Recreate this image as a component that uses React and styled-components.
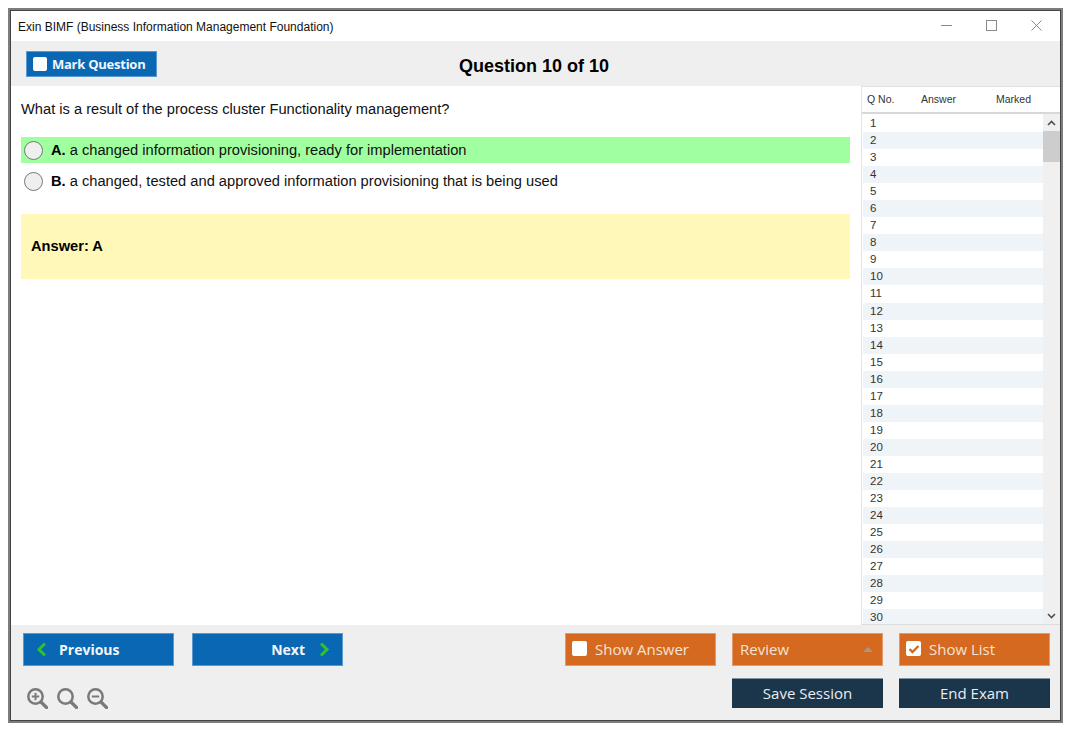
import React from 'react';
import styled, { createGlobalStyle } from 'styled-components';

const GlobalStyle = createGlobalStyle`
  html, body { margin: 0; padding: 0; background: #fff; }
  body { font-family: "Liberation Sans", Arial, sans-serif; color: #000; }
  * { box-sizing: border-box; }
`;

const Page = styled.div`
  width: 1075px;
  height: 735px;
  padding: 8px 12px 12px 8px;
`;

const Win = styled.div`
  width: 100%;
  height: 100%;
  border: 2px solid #7d7d7d;
  outline: 1px solid #444;
  outline-offset: -3px;
  padding: 1px;
  display: flex;
  flex-direction: column;
  background: #fff;
`;

const TitleBar = styled.div`
  height: 30px;
  flex: none;
  display: flex;
  align-items: center;
  justify-content: space-between;
  padding: 2px 0 0 7px;
  font-size: 12px;
  color: #111;
`;

const WinControls = styled.div`
  display: flex;
  align-items: center;
  gap: 34px;
  margin-top: -3px;
  padding-right: 18px;
`;

const TopBar = styled.div`
  height: 45px;
  flex: none;
  background: #efefef;
  display: flex;
  align-items: center;
  position: relative;
  padding: 0 0 0 15px;
`;

const BlueBtn = styled.div`
  background: #0a67b4;
  border: 1px solid #5b9ad0;
  color: #f2f6fa;
  font-family: "Open Sans", sans-serif;
  font-weight: 700;
`;

const MarkBtn = styled(BlueBtn)`
  width: 131px;
  height: 26px;
  margin-top: 1px;
  display: flex;
  align-items: center;
  gap: 5px;
  padding-left: 6px;
  font-size: 13px;
  letter-spacing: -0.25px;
`;

const Box = styled.span`
  width: ${(p) => p.$size || 14}px;
  height: ${(p) => p.$size || 14}px;
  flex: none;
  background: #fff;
  border-radius: 2px;
  display: inline-flex;
  align-items: center;
  justify-content: center;
`;

const QuestionNo = styled.div`
  position: absolute;
  left: 448px;
  top: 15px;
  font-size: 18px;
  font-weight: 700;
  line-height: 21px;
`;

const Main = styled.div`
  flex: 1;
  min-height: 0;
  display: flex;
`;

const Content = styled.div`
  flex: 1;
  min-width: 0;
  padding: 14px 11px 0 10px;
`;

const Question = styled.div`
  font-size: 14.67px;
  line-height: 18px;
  color: #111;
  margin-bottom: 19px;
`;

const Option = styled.div`
  height: 26px;
  display: flex;
  align-items: center;
  gap: 8px;
  padding-left: 3px;
  margin-bottom: 5px;
  font-size: 14.67px;
  color: #111;
  background: ${(p) => (p.$correct ? '#a0ff9f' : 'transparent')};
  b { color: #000; }
`;

const Radio = styled.span`
  width: 19px;
  height: 19px;
  flex: none;
  border-radius: 50%;
  background: #efefef;
  border: 1px solid #777;
`;

const AnswerBox = styled.div`
  margin-top: 20px;
  height: 65px;
  background: #fff8b8;
  display: flex;
  align-items: center;
  padding: 0 0 2px 10px;
  font-size: 14.67px;
  font-weight: 700;
`;

const Side = styled.div`
  width: 199px;
  flex: none;
  display: flex;
  flex-direction: column;
  border-left: 1px solid #e4e4e4;
  border-bottom: 1px solid #dcdcdc;
`;

const SideHead = styled.div`
  height: 28px;
  flex: none;
  border-top: 1px solid #e0e0e0;
  border-bottom: 2px solid #d8d8d8;
  display: grid;
  grid-template-columns: 54px 75px 1fr;
  align-items: center;
  padding: 0 0 2px 5px;
  font-size: 10.5px;
  color: #333;
  background: #fff;
`;

const SideBody = styled.div`
  flex: 1;
  min-height: 0;
  display: flex;
  overflow: hidden;
  padding-left: 1px;
`;

const Rows = styled.div`
  flex: 1;
  min-width: 0;
  overflow: hidden;
  padding-top: 1px;
`;

const Row = styled.div`
  height: 17.06px;
  line-height: 17px;
  padding-left: 7px;
  font-size: 11.5px;
  color: #333;
  background: ${(p) => (p.$odd ? '#eff4f8' : '#fff')};
`;

const Scrollbar = styled.div`
  width: 17px;
  flex: none;
  background: #f0f0f0;
  display: flex;
  flex-direction: column;
  align-items: center;
`;

const ScrollArrow = styled.div`
  height: 17px;
  flex: none;
  display: flex;
  align-items: center;
  justify-content: center;
`;

const ScrollThumb = styled.div`
  width: 100%;
  height: 31px;
  flex: none;
  background: #cdcdcd;
`;

const ScrollTrack = styled.div`
  flex: 1;
`;

const Bottom = styled.div`
  height: 95px;
  flex: none;
  background: #efefef;
  display: flex;
  justify-content: space-between;
  padding: 8px 10px 10px 12px;
`;

const BottomLeft = styled.div`
  display: flex;
  flex-direction: column;
  justify-content: space-between;
`;

const NavRow = styled.div`
  display: flex;
  gap: 18px;
`;

const NavBtn = styled(BlueBtn)`
  width: 151px;
  height: 33px;
  display: flex;
  align-items: center;
  justify-content: ${(p) => (p.$right ? 'flex-end' : 'flex-start')};
  gap: ${(p) => (p.$right ? 14 : 12)}px;
  padding: 0 12px;
  font-size: 14px;
`;

const ZoomRow = styled.div`
  display: flex;
  gap: 9px;
  padding-left: 4px;
  margin-bottom: 1px;
`;

const BottomRight = styled.div`
  display: grid;
  grid-template-columns: repeat(3, 151px);
  grid-auto-rows: 33px;
  column-gap: 16px;
  row-gap: 12px;
`;

const OrangeBtn = styled.div`
  background: #d4691f;
  border: 1px solid #e39a66;
  color: #f6e3d4;
  font-family: "Open Sans", sans-serif;
  font-size: 15px;
  display: flex;
  align-items: center;
  gap: 8px;
  padding: 0 6px 2px;
  justify-content: ${(p) => (p.$between ? 'space-between' : 'flex-start')};
`;

const ReviewLabel = styled.span`
  padding-left: 1px;
`;

const Caret = styled.span`
  width: 0;
  height: 0;
  margin: 2px 3px 0 0;
  border-left: 5px solid transparent;
  border-right: 5px solid transparent;
  border-bottom: 5px solid #a8948a;
`;

const DarkBtn = styled.div`
  grid-column: ${(p) => p.$col};
  background: #1b354b;
  border-top: 1px solid #7f93a3;
  height: 30px;
  padding-bottom: 2px;
  color: #e9eef2;
  font-family: "Open Sans", sans-serif;
  font-size: 15px;
  display: flex;
  align-items: center;
  justify-content: center;
`;

const Chevron = ({ dir }) => (
  <svg width="11" height="15" viewBox="0 0 11 15">
    <path
      d={dir === 'left' ? 'M9 1.5 3 7.5l6 6' : 'M2 1.5l6 6-6 6'}
      fill="none"
      stroke="#2fc32a"
      strokeWidth="3"
    />
  </svg>
);

const ZoomIcon = ({ sign }) => (
  <svg width="21" height="21" viewBox="0 0 21 21">
    <circle cx="8.5" cy="8.5" r="7.2" fill="none" stroke="#7a7a7a" strokeWidth="2.5" />
    <path d="M14 14 19.5 19.5" stroke="#7a7a7a" strokeWidth="3.2" strokeLinecap="round" />
    {sign && <path d="M4.8 8.5h7.4" stroke="#7a7a7a" strokeWidth="2" />}
    {sign === 'plus' && <path d="M8.5 4.8v7.4" stroke="#7a7a7a" strokeWidth="2" />}
  </svg>
);

const rows = Array.from({ length: 30 }, (_, i) => i + 1);

export default function App() {
  return (
    <Page>
      <GlobalStyle />
      <Win>
        <TitleBar>
          <span>Exin BIMF (Business Information Management Foundation)</span>
          <WinControls>
            <svg width="11" height="11" viewBox="0 0 11 11">
              <path d="M0 5.5h11" stroke="#8a8a8a" />
            </svg>
            <svg width="11" height="11" viewBox="0 0 11 11">
              <rect x=".5" y=".5" width="10" height="10" fill="none" stroke="#8a8a8a" />
            </svg>
            <svg width="11" height="11" viewBox="0 0 11 11">
              <path d="M.5.5l10 10M10.5.5l-10 10" stroke="#8a8a8a" />
            </svg>
          </WinControls>
        </TitleBar>
        <TopBar>
          <MarkBtn>
            <Box />
            Mark Question
          </MarkBtn>
          <QuestionNo>Question 10 of 10</QuestionNo>
        </TopBar>
        <Main>
          <Content>
            <Question>What is a result of the process cluster Functionality management?</Question>
            <Option $correct>
              <Radio />
              <span><b>A.</b> a changed information provisioning, ready for implementation</span>
            </Option>
            <Option>
              <Radio />
              <span><b>B.</b> a changed, tested and approved information provisioning that is being used</span>
            </Option>
            <AnswerBox>Answer: A</AnswerBox>
          </Content>
          <Side>
            <SideHead>
              <span>Q No.</span>
              <span>Answer</span>
              <span>Marked</span>
            </SideHead>
            <SideBody>
              <Rows>
                {rows.map((n) => (
                  <Row key={n} $odd={n % 2 === 0}>{n}</Row>
                ))}
              </Rows>
              <Scrollbar>
                <ScrollArrow>
                  <svg width="9" height="6" viewBox="0 0 9 6">
                    <path d="M1 5l3.5-3.5L8 5" fill="none" stroke="#505050" strokeWidth="1.6" />
                  </svg>
                </ScrollArrow>
                <ScrollThumb />
                <ScrollTrack />
                <ScrollArrow>
                  <svg width="9" height="6" viewBox="0 0 9 6">
                    <path d="M1 1l3.5 3.5L8 1" fill="none" stroke="#505050" strokeWidth="1.6" />
                  </svg>
                </ScrollArrow>
              </Scrollbar>
            </SideBody>
          </Side>
        </Main>
        <Bottom>
          <BottomLeft>
            <NavRow>
              <NavBtn>
                <Chevron dir="left" />
                Previous
              </NavBtn>
              <NavBtn $right>
                Next
                <Chevron dir="right" />
              </NavBtn>
            </NavRow>
            <ZoomRow>
              <ZoomIcon sign="plus" />
              <ZoomIcon />
              <ZoomIcon sign="minus" />
            </ZoomRow>
          </BottomLeft>
          <BottomRight>
            <OrangeBtn>
              <Box $size={15} />
              Show Answer
            </OrangeBtn>
            <OrangeBtn $between>
              <ReviewLabel>Review</ReviewLabel>
              <Caret />
            </OrangeBtn>
            <OrangeBtn>
              <Box $size={15}>
                <svg width="12" height="10" viewBox="0 0 12 10">
                  <path d="M1.5 5l3 3 6-6" fill="none" stroke="#d4691f" strokeWidth="2.4" />
                </svg>
              </Box>
              Show List
            </OrangeBtn>
            <DarkBtn $col={2}>Save Session</DarkBtn>
            <DarkBtn $col={3}>End Exam</DarkBtn>
          </BottomRight>
        </Bottom>
      </Win>
    </Page>
  );
}
